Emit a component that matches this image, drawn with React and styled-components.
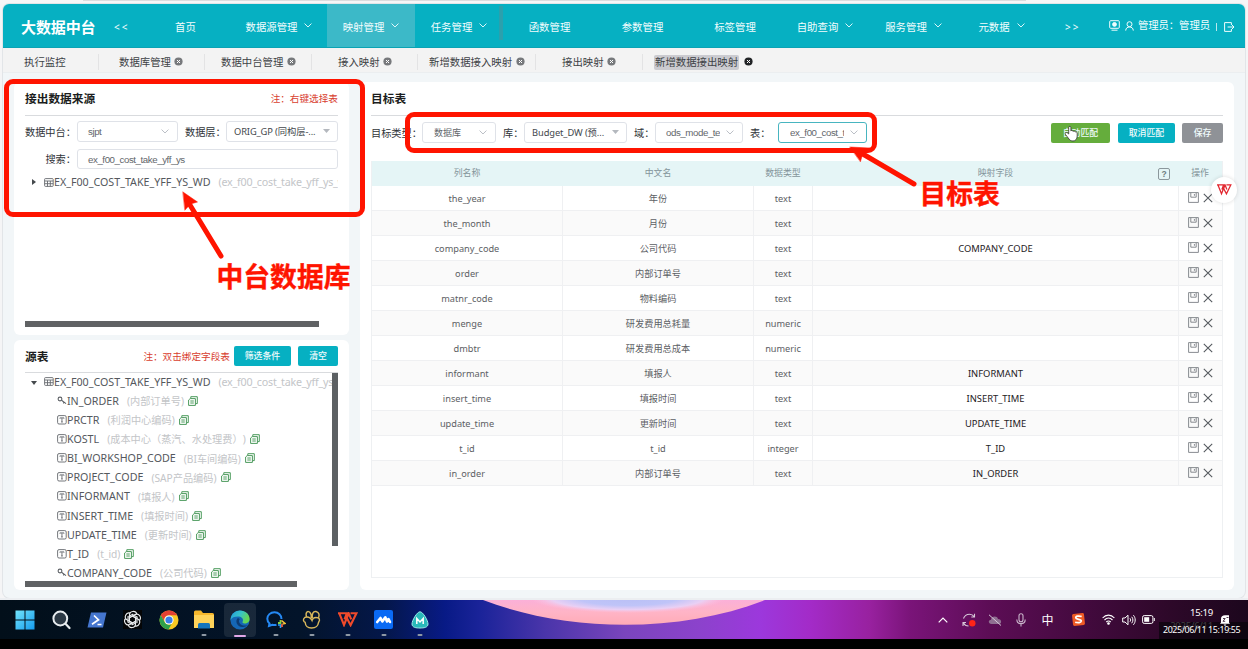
import React from "react";
import styled, { createGlobalStyle, css } from "styled-components";

const TEAL = "#06b0c2";
const RED = "#ff1400";
const SANS = `"Noto Sans", "Noto Sans CJK SC", sans-serif`;
const ARIAL = `"Liberation Sans", "Noto Sans CJK SC", sans-serif`;

const Global = createGlobalStyle`
  * { box-sizing: border-box; }
  html, body { margin: 0; padding: 0; overflow: hidden; }
  body { font-family: ${SANS}; font-size: 10.4px; color: #44484c; background: #f5f5f6; text-spacing-trim: space-all; }
  svg { display: block; flex: none; }
`;

/* ---------- shell ---------- */
const Screen = styled.div`
  position: relative; width: 1248px; height: 649px; overflow: hidden;
  display: flex; flex-direction: column;
`;
const BrowserEdge = styled.div`
  height: 4px; flex: none; display: flex; padding-left: 83px;
  background: #f6f6f7;
  &::before { content: ""; width: 943px; height: 1px; background: #dcdcde; }
`;
const Window = styled.div`
  height: 594px; margin: 0 3px; flex: none; display: flex; flex-direction: column;
  border-radius: 6px 6px 7px 7px; overflow: hidden; background: #f2f6f8;
  box-shadow: 0 0 0 1px #e2e5e8;
`;
const Edge = styled.div`height: 2px; background: #eceef1; flex: none;`;

/* ---------- header ---------- */
const Header = styled.header`
  height: 44px; flex: none; display: flex; align-items: center; background: ${TEAL};
  color: #f2fdfe; border-bottom: 1px solid #0aa3b4; white-space: nowrap;
`;
const Logo = styled.div`
  width: 111px; padding: 1px 0 0 18px; font-size: 15px; font-weight: 700; color: #fff;
  letter-spacing: -0.1px;
`;
const Arrows = styled.div`width: ${p => p.$w}px; letter-spacing: 2px; font-size: 10px; padding: 2px 0 0 ${p => p.$pl || 0}px;`;
const NavItem = styled.div`
  position: relative; width: ${p => p.$w}px; height: 43px; display: flex; align-items: center; justify-content: center;
  gap: 7px; padding-top: 1px; background: ${p => (p.$active ? "#3cb9c8" : "transparent")};
  svg { margin-top: -2px; }
  ${p => p.$streak && css`&::after { content: ""; position: absolute; right: 0; top: 2px; width: 4px; height: 34px; background: #2ba0ad; }`}
`;
const UserArea = styled.div`display: flex; align-items: center; margin-left: auto; padding-right: 10px;`;
const UserName = styled.span`margin: -2px 6px 0 4px; letter-spacing: -0.1px;`;
const Pipe = styled.span`width: 1px; height: 8px; background: #b9e8ee; margin: 3px 7px 0 0;`;
const Shift = styled.span`display: flex; margin: ${p => p.$m};`;

/* ---------- tabs ---------- */
const TabBar = styled.div`
  height: 25px; flex: none; display: flex; align-items: center; background: #f3f3f3;
  border-bottom: 1px solid #ebeef0; white-space: nowrap; padding-top: 4px;
`;
const Tab = styled.div`
  width: ${p => p.$w}px; padding-left: ${p => p.$pl}px; height: 16px; display: flex; align-items: center; gap: ${p => (p.$last ? 5 : 3.5)}px;
  border-right: 1px solid ${p => (p.$last ? "transparent" : "#e3e3e4")};
  color: #3e4246;
  svg { margin-top: -1px; }
`;
const TabText = styled.span`
  line-height: 15px; border-radius: 2px;
  ${p => p.$on && css`background: #cbcbd0; padding: 0 1px;`}
`;

/* ---------- panels ---------- */
const Content = styled.main`flex: 1; min-height: 0; display: flex; gap: 11px; padding: 9px 11px 8px;`;
const LeftCol = styled.div`width: 335px; display: flex; flex-direction: column; gap: 5px;`;
const Card = styled.section`
  background: #fff; border-radius: 6px; padding: 0 11px; display: flex; flex-direction: column;
  ${p => (p.$h ? `height: ${p.$h}px; flex: none;` : "flex: 1;")} min-width: 0; overflow: hidden;
`;
const CardHead = styled.div`
  height: ${p => p.$h || 34}px; flex: none; display: flex; align-items: center; border-bottom: 1px solid #d9dbde; white-space: nowrap;
  padding-bottom: ${p => p.$pb ?? 2}px;
`;
const Title = styled.h2`margin: 0; font-size: 11.7px; font-weight: 700; color: #1b1d20; flex: 1;`;
const Note = styled.span`font-size: 9.65px; color: #d8402f;`;
const FormRow = styled.div`height: ${p => p.$h}px; flex: none; display: flex; align-items: center; white-space: nowrap;`;
const Label = styled.label`
  width: ${p => p.$w}px; flex: none; text-align: ${p => (p.$right ? "right" : "left")}; color: #303438; font-size: 10.2px;
  padding-bottom: 1px; padding-right: ${p => (p.$right ? 1 : 0)}px;
`;
const Field = styled.div`
  width: ${p => p.$w}px; height: 20.5px; flex: none; display: flex; align-items: center; justify-content: space-between;
  border: 1px solid ${p => (p.$focus ? "#48b5c0" : "#dfe2e8")}; border-radius: 3px; background: #fff;
  padding: 0 ${p => p.$pr || 8}px 0 ${p => p.$pl || 10}px; color: #62666b; letter-spacing: ${p => p.$ls ?? -0.42}px;
  font-family: ${p => (p.$noto ? SANS : ARIAL)}; font-size: ${p => p.$fs || 9.7}px; overflow: hidden;
  ${p => p.$noto && css`color: #43474c; padding-bottom: 1px;`}
`;
const Clip = styled.span`overflow: hidden; ${p => p.$w && `width: ${p.$w}px;`}`;
const Button = styled.button`
  width: ${p => p.$w}px; height: ${p => p.$h || 20}px; border: 0; border-radius: 2px; padding: 0; flex: none;
  background: ${p => p.$bg || TEAL}; color: #f0fbfc; font: 500 8.9px ${SANS}; margin-left: ${p => p.$ml || 0}px;
`;
const Spacer = styled.div`flex: 1;`;
const HScroll = styled.div`width: ${p => p.$w}px; height: 6px; flex: none; background: #606264;`;

/* ---------- tree ---------- */
const TreeWrap = styled.div`display: flex; height: 208px; flex: none; overflow: hidden;`;
const Tree = styled.div`flex: 1; min-width: 0; overflow: hidden;`;
const VScroll = styled.div`width: 6px; height: 173px; background: #5c6063;`;
const Node = styled.div`
  height: ${p => p.$h || 19.17}px; display: flex; align-items: center; white-space: nowrap; overflow: hidden;
  padding-left: ${p => p.$pl}px; font-size: 10.7px; color: #54585d;
  ${p => p.$root && css`height: 18px; padding-bottom: 1px;`}
`;
const Caret = styled.span`
  width: 0; height: 0; margin-right: 7px; flex: none;
  ${p => p.$open
    ? css`border: 3px solid transparent; border-top: 4px solid #45494d; border-bottom: 0; margin-top: 2px;`
    : css`border: 3px solid transparent; border-left: 4px solid #45494d; border-right: 0; margin-right: 8px; margin-left: 1px;`}
`;
const Dim = styled.span`
  color: #c3c5c8; margin: 0 4px 0 8px; font-size: ${p => (p.$wide ? 10.7 : 10.2)}px;
  letter-spacing: ${p => (p.$wide ? -0.22 : 0)}px;
`;

/* ---------- table ---------- */
const Grid = styled.div`height: 417px; flex: none; border: 1px solid #eef0f2; border-top: 0; display: flex; flex-direction: column;`;
const Row = styled.div`
  display: grid; grid-template-columns: 191px 191px 59px 366px 1fr; height: 25px; flex: none;
  background: ${p => (p.$head ? "#e5f5f6" : p.$odd ? "#fafafa" : "#fff")};
  border-bottom: 1px solid ${p => (p.$head ? "#e5f5f6" : "#eff0f2")};
`;
const Cell = styled.div`
  position: relative; display: flex; align-items: center; justify-content: center; gap: 4px; white-space: nowrap;
  border-right: 1px solid ${p => (p.$plain ? "transparent" : "#eff0f2")};
  color: ${p => (p.$head ? "#83949a" : p.$strong ? "#1e2124" : "#5c6064")}; font-size: ${p => p.$fs || 9.2}px;
  padding-bottom: ${p => (p.$head || p.$up ? 1 : 0)}px;
`;
const Help = styled.span`
  position: absolute; right: 8px; top: 7px; width: 12px; height: 12px; border: 1px solid #8b979c; border-radius: 2px;
  font: 700 8.5px/10px ${ARIAL}; text-align: center; color: #6f7c81;
`;

/* ---------- annotations ---------- */
const Frame = styled.div`
  position: absolute; left: ${p => p.$x}px; top: ${p => p.$y}px; width: ${p => p.$w}px; height: ${p => p.$h}px;
  border: 5px solid ${RED}; border-radius: 9px;
`;
const Callout = styled.div`
  position: absolute; left: ${p => p.$x}px; top: ${p => p.$y}px; font: 700 26.8px/32px "Noto Sans CJK SC", sans-serif;
  color: ${RED}; white-space: nowrap; text-shadow: 0 0 2px #fff, 0 0 2px #fff; -webkit-text-stroke: .4px ${RED};
`;
const Overlay = styled.svg`position: absolute; left: 0; top: 0; pointer-events: none;`;
const Badge = styled.div`
  position: absolute; left: 1211px; top: 177px; width: 26px; height: 26px; border-radius: 50%; background: #fff;
  box-shadow: 0 0 4px rgba(0,0,0,.14); display: flex; align-items: center; justify-content: center;
`;

/* ---------- taskbar ---------- */
const Taskbar = styled.footer`
  position: relative; height: 39px; flex: none; display: flex; align-items: center; padding-left: 7px; overflow: hidden;
  background: linear-gradient(90deg, #020f1a 0, #03142a 300px, #04174a 385px, #081a86 445px, #1a2399 480px, #4a35aa 545px, #7a45bd 625px, #8c42cc 700px, #9c38dc 760px, #a32bc8 810px, #98219f 870px, #7a1479 910px, #5c0d55 990px, #440a3f 1080px, #2d0829 1170px, #1c071d 1248px);
`;
const Wallpaper = styled.svg`position: absolute; left: 460px; top: 0;`;
const TaskIcon = styled.div`
  position: relative; width: 35.9px; height: 34px; display: flex; align-items: center; justify-content: center;
  z-index: 1;
  ${p => p.$on && css`background: rgba(255,255,255,.09); border-radius: 4px; width: 32px; margin: 0 2px;`}
  &::after {
    content: ""; position: absolute; bottom: ${p => (p.$on ? 0 : 1)}px; left: 50%; height: 2px; border-radius: 1px; transform: translateX(-50%);
    width: ${p => (p.$on ? 12 : p.$run ? 5 : 0)}px; background: ${p => (p.$on ? "#e3a8e8" : "#8f9aa5")};
  }
`;
const Tray = styled.div`margin-left: auto; height: 39px; display: flex; align-items: center; color: #fff;`;
const TrayItem = styled.div`position: relative; z-index: 3; width: ${p => p.$w}px; display: flex; justify-content: center; font-size: 12px;`;
const Clock = styled.div`width: 52px; height: 32px; text-align: right; font-size: 9.6px; line-height: 13px; margin-top: 5px; letter-spacing: -0.3px; white-space: nowrap;`;
const Ghost = styled.div`color: #b5a6b5;`;
const Stamp = styled.div`
  position: absolute; right: 0; top: 22px; width: 89px; height: 17px; background: rgba(8,4,10,.68); z-index: 2; color: #fff;
  font-size: 8.9px; line-height: 16px; padding-left: 4px; white-space: nowrap; letter-spacing: -0.4px;
`;
const Bottom = styled.div`height: 10px; background: #000; flex: none;`;

/* ---------- icons ---------- */
const Chevron = ({ c = "#e8fafc", w = 8, up }) => (
  <svg width={w} height={w * 0.6} viewBox="0 0 10 6"><path d={up ? "M.7 5.300L5 1 9.300 5.300" : "M.7 .7L5 5 9.300 .7"} fill="none" stroke={c} strokeWidth="1.200" /></svg>
);
const Down = () => <svg width="7" height="4" viewBox="0 0 7 4"><path d="M0 0H7L3.5 4Z" fill="#b4b8be" /></svg>;
const Close = ({ c = "#77797c" }) => (
  <svg width="9" height="9" viewBox="0 0 9 9"><circle cx="4.5" cy="4.5" r="4.1" fill={c} /><path d="M3 3L6 6M6 3L3 6" stroke="#fff" strokeWidth="1" /></svg>
);
const TableIcon = () => (
  <svg width="10" height="9" viewBox="0 0 10 9" fill="none" stroke="#65696e" strokeWidth=".9"><rect x=".6" y=".6" width="8.6" height="7.8" rx=".8" /><path d="M.6 3H9.2M.6 5.7H9.2M3.5 3V8.4M6.3 3V8.4" /></svg>
);
const TypeIcon = () => (
  <svg width="10" height="10" viewBox="0 0 10 10" fill="none" stroke="#65696e" strokeWidth=".9"><rect x=".6" y=".6" width="8.6" height="8.4" rx="1.4" /><path d="M2.9 3.6V2.9H7V3.6M4.95 2.9V7M4.1 7H5.8" /></svg>
);
const KeyIcon = () => (
  <svg width="10" height="9" viewBox="0 0 10 9" fill="none" stroke="#5d6166" strokeWidth="1.1"><circle cx="3" cy="3" r="1.9" /><path d="M4.5 4.2L9 7.6M7 6.2L6.2 7.4" /></svg>
);
const CopyIcon = () => (
  <svg width="10" height="10" viewBox="0 0 10 10" fill="none" stroke="#4c9a5c" strokeWidth="1"><path d="M2.8 2.4V.7H9.3V7.6H7.6" /><path d="M.6 4L2.2 2.6H7.4V9.4H.6Z" /><path d="M2.3 5H5.8M2.3 7H5.8" /></svg>
);
const SaveIcon = () => (
  <svg width="11" height="11" viewBox="0 0 11 11" fill="none" stroke="#7b7f84" strokeWidth=".9"><path d="M.6 .6H10.4V10.4H.6Z" /><path d="M2.8 .8V5.2H8.2V.8M6.4 2V3.8" /></svg>
);
const CrossIcon = () => (
  <svg width="10" height="10" viewBox="0 0 10 10"><path d="M.8 .8L9.2 9.2M9.2 .8L.8 9.2" stroke="#555a5f" strokeWidth="1.1" /></svg>
);
const WMark = ({ w, c, sw = 2.1 }) => (
  <svg width={w} height={w * 0.75} viewBox="0 0 20 15" fill="none" stroke={c} strokeWidth={sw}>
    <path d="M0 1.300H8.800L6.500 7.300M1.300 1.300L6 13L10.700 1.300L13.200 7.300" /><path d="M8.800 6L12.600 13.200L18.400 1.300H12.500" />
  </svg>
);

/* ---------- data ---------- */
const NAV = [
  ["首页", 91], ["数据源管理", 96, 1], ["映射管理", 88, 1], ["任务管理", 88, 1], ["函数管理", 93], ["参数管理", 93],
  ["标签管理", 92], ["自助查询", 88, 1], ["服务管理", 89, 1], ["元数据", 87, 1],
];
const TABS = [
  ["执行监控", 96, 21], ["数据库管理", 106, 20], ["数据中台管理", 107, 16], ["接入映射", 106, 26],
  ["新增数据接入映射", 118, 11], ["接出映射", 107, 26], ["新增数据接出映射", 118, 11],
];
const FIELDS = [
  ["key", "IN_ORDER", "(内部订单号)"], ["t", "PRCTR", "(利润中心编码)"], ["t", "KOSTL", "(成本中心（蒸汽、水处理费）)"],
  ["t", "BI_WORKSHOP_CODE", "(BI车间编码)"], ["t", "PROJECT_CODE", "(SAP产品编码)"], ["t", "INFORMANT", "(填报人)"],
  ["t", "INSERT_TIME", "(填报时间)"], ["t", "UPDATE_TIME", "(更新时间)"], ["t", "T_ID", "(t_id)"], ["key", "COMPANY_CODE", "(公司代码)"],
];
const ROWS = [
  ["the_year", "年份", "text", ""], ["the_month", "月份", "text", ""], ["company_code", "公司代码", "text", "COMPANY_CODE"],
  ["order", "内部订单号", "text", ""], ["matnr_code", "物料编码", "text", ""], ["menge", "研发费用总耗量", "numeric", ""],
  ["dmbtr", "研发费用总成本", "numeric", ""], ["informant", "填报人", "text", "INFORMANT"], ["insert_time", "填报时间", "text", "INSERT_TIME"],
  ["update_time", "更新时间", "text", "UPDATE_TIME"], ["t_id", "t_id", "integer", "T_ID"], ["in_order", "内部订单号", "text", "IN_ORDER"],
];

function TopBar() {
  return (
    <Header>
      <Logo>大数据中台</Logo>
      <Arrows $w={26}>&lt;&lt;</Arrows>
      {NAV.map(([t, w, more]) => (
        <NavItem key={t} $w={w} $active={t === "映射管理"} $streak={t === "任务管理"}>{t}{more && <Chevron />}</NavItem>
      ))}
      <Arrows $w={40} $pl={20}>&gt;&gt;</Arrows>
      <UserArea>
        <svg width="11" height="11" viewBox="0 0 11 11" fill="none" stroke="#f0fcfd"><rect x=".7" y=".7" width="9.6" height="7.6" rx="1" /><circle cx="5.5" cy="4.4" r="1.9" fill="#f0fcfd" /><path d="M2.5 10.2H8.5" /></svg>
        <Shift $m="1px 0 0 5px">
          <svg width="9" height="10" viewBox="0 0 9 10" fill="none" stroke="#f0fcfd"><circle cx="4.5" cy="3.2" r="2.5" /><path d="M.7 9.6C.8 7 2.5 6 4.5 6S8.200 7 8.300 9.600" /></svg>
        </Shift>
        <UserName>管理员：管理员</UserName>
        <Pipe />
        <Shift $m="3px 0 0 0">
          <svg width="11" height="10" viewBox="0 0 11 10" fill="none" stroke="#f0fcfd"><path d="M7.400 3V.6H.6V9.400H7.400V7M3.600 5H10M8 3L10 5L8 7" /></svg>
        </Shift>
      </UserArea>
    </Header>
  );
}

function SourcePanel() {
  return (
    <Card $h={253}>
      <CardHead><Title>接出数据来源</Title><Note>注：右键选择表</Note></CardHead>
      <FormRow $h={31}>
        <Label $w={52}>数据中台：</Label>
        <Field $w={101}>sjpt<Chevron c="#b8bcc3" /></Field>
        <Spacer />
        <Label $w={41}>数据层：</Label>
        <Field $w={112} $noto $pl={7} $pr={7} $fs={9.3} $ls={-0.1}>ORIG_GP (同构层-...<Down /></Field>
      </FormRow>
      <FormRow $h={24}>
        <Label $w={52} $right>搜索：</Label>
        <Field $w={261}>ex_f00_cost_take_yff_ys</Field>
      </FormRow>
      <Node $pl={6} $h={22}><Caret /><TableIcon />EX_F00_COST_TAKE_YFF_YS_WD<Dim $wide>(ex_f00_cost_take_yff_ys_wd)</Dim></Node>
      <Spacer />
      <HScroll $w={294} />
      <FormRow $h={8} />
    </Card>
  );
}

function FieldPanel() {
  return (
    <Card>
      <CardHead $h={33} $pb={1}>
        <Title>源表</Title><Note>注：双击绑定字段表</Note>
        <Button $w={57} $ml={4}>筛选条件</Button><Button $w={40} $ml={7}>清空</Button>
      </CardHead>
      <TreeWrap>
        <Tree>
          <Node $pl={6} $root><Caret $open /><TableIcon />EX_F00_COST_TAKE_YFF_YS_WD<Dim $wide>(ex_f00_cost_take_yff_ys_wd)</Dim></Node>
          {FIELDS.map(([k, n, d]) => (
            <Node key={n} $pl={32}>{k === "key" ? <KeyIcon /> : <TypeIcon />}{n}<Dim>{d}</Dim><CopyIcon /></Node>
          ))}
        </Tree>
        <VScroll />
      </TreeWrap>
      <HScroll $w={272} />
    </Card>
  );
}

function TargetPanel() {
  return (
    <Card>
      <CardHead><Title>目标表</Title></CardHead>
      <FormRow $h={33}>
        <Label $w={51}>目标类型：</Label>
        <Field $w={74} $pl={11} $fs={9} $ls={0}>数据库<Chevron c="#b8bcc3" /></Field>
        <Shift $m="0 0 0 7px"><Label $w={21}>库：</Label></Shift>
        <Field $w={103} $noto $pl={7} $pr={7} $fs={9.3} $ls={-0.08}>Budget_DW (预...<Down /></Field>
        <Shift $m="0 0 0 7px"><Label $w={21}>域：</Label></Shift>
        <Field $w={88} $pl={10}><Clip>ods_mode_te</Clip><Chevron c="#b8bcc3" /></Field>
        <Shift $m="0 0 0 7px"><Label $w={28}>表：</Label></Shift>
        <Field $w={89} $focus $pl={11}><Clip $w={54}>ex_f00_cost_take</Clip><Chevron c="#b8bcc3" /></Field>
        <Spacer />
        <Button $w={59} $bg="#65ad3c">自动匹配</Button>
        <Button $w={57} $ml={8}>取消匹配</Button>
        <Button $w={41} $ml={7} $bg="#8f9297">保存</Button>
      </FormRow>
      <FormRow $h={12} />
      <Grid>
        <Row $head>
          {["列名称", "中文名", "数据类型"].map(t => <Cell key={t} $head $plain $fs={8.9}>{t}</Cell>)}
          <Cell $head $plain $fs={8.9}>映射字段<Help>?</Help></Cell>
          <Cell $head $plain $fs={8.9}>操作</Cell>
        </Row>
        {ROWS.map((r, i) => (
          <Row key={r[0]} $odd={i % 2 === 1}>
            <Cell>{r[0]}</Cell><Cell>{r[1]}</Cell><Cell>{r[2]}</Cell><Cell $strong $fs={9.4}>{r[3]}</Cell>
            <Cell $plain $up><SaveIcon /><CrossIcon /></Cell>
          </Row>
        ))}
      </Grid>
    </Card>
  );
}

function Annotations() {
  return (
    <>
      <Frame $x={4} $y={79} $w={361} $h={138} />
      <Frame $x={405} $y={112} $w={472} $h={41} />
      <Overlay width="1248" height="600">
        <g fill={RED} stroke={RED} strokeLinecap="round">
          <path d="M221 256L190 205" strokeWidth="5" /><path d="M183 192L197.500 202L190.500 204L185 210Z" strokeWidth=".5" />
          <path d="M914 184L862 153.500" strokeWidth="5" /><path d="M850 147L869.500 148L863 153L860.500 161.500Z" strokeWidth=".5" />
        </g>
        <path d="M1069 139L1065.500 134.500C1064.500 133 1066 131.800 1067.500 133L1068.700 134V127.500C1068.700 126 1070.900 126 1070.900 127.500V131C1071.500 130 1073 130.300 1073 131.500C1073.700 130.700 1075 131 1075 132C1076 131.500 1077.200 132 1077.200 133V136C1077.200 139 1075.500 141 1073 141C1071 141 1070 140.300 1069 139Z" fill="#fff" stroke="#333" strokeWidth=".8" />
      </Overlay>
      <Callout $x={216.5} $y={260}>中台数据库</Callout>
      <Callout $x={919.5} $y={177}>目标表</Callout>
      <Badge><WMark w={15} c="#e2252e" sw={1.7} /></Badge>
    </>
  );
}

function SystemBar() {
  return (
    <Taskbar>
      <Wallpaper width="340" height="39" viewBox="460 0 340 39">
        <defs>
          <linearGradient id="pink" x1="0" x2="0" y1="0" y2="1"><stop offset="0" stopColor="#fbb0d8" /><stop offset=".5" stopColor="#ffb4c6" /><stop offset="1" stopColor="#ffabb6" /></linearGradient>
          <radialGradient id="glow"><stop offset="0" stopColor="#b9bff5" /><stop offset=".5" stopColor="#bfc4f8" /><stop offset=".78" stopColor="#e9d0f4" /><stop offset="1" stopColor="#ffc0dc" stopOpacity="0" /></radialGradient>
        </defs>
        <path d="M483 0C570 33 680 33 765 0Z" fill="url(#pink)" />
        <ellipse cx="628" cy="-2" rx="98" ry="15" fill="url(#glow)" />
      </Wallpaper>
      <TaskIcon>
        <svg width="20" height="20" viewBox="0 0 20 20"><defs><linearGradient id="win" x2="1" y2="1"><stop stopColor="#72e4fb" /><stop offset="1" stopColor="#159bed" /></linearGradient></defs><path d="M.5 .5H9.500V9.500H.5ZM10.500 .5H19.500V9.500H10.500ZM.5 10.500H9.500V19.500H.5ZM10.500 10.500H19.500V19.500H10.500Z" fill="url(#win)" /></svg>
      </TaskIcon>
      <TaskIcon>
        <svg width="20" height="20" viewBox="0 0 20 20"><circle cx="9.300" cy="8.500" r="6.900" fill="#2c3945" stroke="#e8ecef" strokeWidth="2" /><path d="M14.500 13.700L18.500 18" stroke="#e8ecef" strokeWidth="2.200" strokeLinecap="round" /></svg>
      </TaskIcon>
      <TaskIcon>
        <svg width="20" height="16" viewBox="0 0 20 16"><path d="M4 .5H19.500L16 15.500H.5Z" fill="#4576cf" /><path d="M7 3.500L11.500 7.800L5 12.300M10.500 12.500H14.500" fill="none" stroke="#fff" strokeWidth="1.700" /></svg>
      </TaskIcon>
      <TaskIcon>
        <svg width="19" height="19" viewBox="0 0 20 20"><rect width="20" height="20" fill="#050607" /><g fill="none" stroke="#e9ebec" strokeWidth="1.200">{[0, 60, 120, 180, 240, 300].map(a => <path key={a} transform={`rotate(${a} 10 10)`} d="M6.800 12V5.500C6.800 .5 13.500 .3 14.500 4.300M6.800 8.200L11.500 5.400L15.500 7.800" />)}</g></svg>
      </TaskIcon>
      <TaskIcon>
        <svg width="20" height="20" viewBox="0 0 20 20"><circle cx="10" cy="10" r="9.500" fill="#f9c922" /><path d="M1.800 5.200A9.500 9.500 0 0 1 18.200 5.200H10A4.800 4.800 0 0 0 5.800 12.400Z" fill="#e34133" /><path d="M1.800 5.200L5.900 12.400A4.800 4.800 0 0 0 12.500 14L9.500 19.500A9.500 9.500 0 0 1 1.800 5.200Z" fill="#2fa04c" /><circle cx="10" cy="10" r="4.600" fill="#fff" /><circle cx="10" cy="10" r="3.600" fill="#3a7fe8" /></svg>
      </TaskIcon>
      <TaskIcon $run>
        <svg width="20" height="19" viewBox="0 0 20 19"><path d="M0 2Q0 .5 1.500 .5H7L9 3H18.500Q20 3 20 4.500V17H0Z" fill="#f6b72c" /><path d="M0 5H20V18H0Z" fill="#ffd35a" /><path d="M4 18.500V14.500Q4 13 5.500 13H14.500Q16 13 16 14.500V18.500Z" fill="#1675bd" /></svg>
      </TaskIcon>
      <TaskIcon $on>
        <svg width="20" height="20" viewBox="0 0 20 20"><defs><linearGradient id="edge" x2="1" y2=".4"><stop stopColor="#229bdc" /><stop offset=".55" stopColor="#38c5c6" /><stop offset="1" stopColor="#66d653" /></linearGradient></defs><circle cx="10" cy="10" r="9.600" fill="#1567b5" /><path d="M.6 8.500C1.500 3.500 5.500 .4 10 .4C15.500 .4 19.600 4 19.600 9C19.600 12 17 13.500 14.800 13.500C12.500 13.500 12.300 12.500 12.700 11.500C14 8.500 11 6.500 8 6.500C4.500 6.500 1.500 7.500 .6 10Z" fill="url(#edge)" /><path d="M8 8C4.500 10.500 7 17.500 13 17C15.500 16.800 17 15.800 17.800 15C13 16.500 9 14.500 9 11C9 10 9.800 9 9.800 9Z" fill="#0c3c74" /></svg>
      </TaskIcon>
      <TaskIcon $run>
        <svg width="20" height="18" viewBox="0 0 20 18" fill="none"><path d="M15.500 8C15.500 4 12.500 1.300 8.500 1.300S1.300 4 1.300 7.800C1.300 10 2.300 11.500 3.500 12.500L3 15L6.300 13.800C8 14.300 9 14.200 10.500 13.800" stroke="#2589f4" strokeWidth="2" /><path d="M14.500 9V12H12" stroke="#8bcf44" strokeWidth="1.800" /><path d="M15.500 9.500L19 12.500L16.500 13" stroke="#f5c338" strokeWidth="1.600" /><path d="M12 14H14.500V17" stroke="#2b9ef5" strokeWidth="1.600" /><path d="M16 13V16" stroke="#ec5a3c" strokeWidth="1.800" /></svg>
      </TaskIcon>
      <TaskIcon $run>
        <svg width="20" height="19" viewBox="0 0 20 19" fill="none" stroke="#d9b85c" strokeWidth="1.400"><path d="M5 7C1.500 7 .8 10 2 11.500C2.500 12 3 12 3.200 12.500C3.500 16.500 6 18 9.500 18S16 16.500 16.500 12.500C18.500 9.500 17.500 7.500 14 7.500C12 7.500 10.500 8.500 10 10.500C9 8.500 7.500 7 5 7Z" /><path d="M4.500 7C3 2 6 .3 8 2.500C9.500 4 9.500 6 9.200 8.500M10.300 8C9.800 4 11 1 14 1.500C17.500 2.500 17.500 5 16.500 8" /></svg>
      </TaskIcon>
      <TaskIcon $run><WMark w={20} c="#f04a2b" /></TaskIcon>
      <TaskIcon $run>
        <svg width="19" height="19" viewBox="0 0 19 19"><rect width="19" height="19" rx="2" fill="#0a6af4" /><path d="M3.200 12L6.500 8L8.300 11.500L11.300 7.300L13 11.500L14.500 9L16 12" fill="none" stroke="#fff" strokeWidth="2.600" strokeLinejoin="round" strokeLinecap="round" /></svg>
      </TaskIcon>
      <TaskIcon $run>
        <svg width="18" height="18" viewBox="0 0 18 18"><path d="M9 .8C12 .8 17 9.500 17 13C17 16.500 13 17 9 17S1 16.500 1 13C1 9.500 6 .8 9 .8Z" fill="#29b9ba" stroke="#9ceaea" /><path d="M5.800 13V7.500L9 11L12.200 7.500V13" fill="none" stroke="#fff" strokeWidth="1.500" /></svg>
      </TaskIcon>
      <Tray>
        <TrayItem $w={26}><Chevron c="#fff" w={10} up /></TrayItem>
        <TrayItem $w={26}>
          <svg width="14" height="14" viewBox="0 0 14 14" fill="none" stroke="#d6c8d8" strokeWidth="1.100"><path d="M1.500 5.500C2.500 2.500 5 1.200 7.500 1.200C9.500 1.200 11.200 2.200 12 3.500M12.500 .8V4H9.300M1 13V9.500H4M1.500 10C2.500 12 4.500 13 6.500 13" /><circle cx="10.300" cy="10.300" r="3.200" fill="#ff2418" stroke="none" /></svg>
        </TrayItem>
        <TrayItem $w={26}>
          <svg width="14" height="12" viewBox="0 0 14 12"><path d="M3.500 10C0 10 0 5.800 3 5.800C3.500 1.800 9 1.500 10 5C14 5 14 10 11 10Z" fill="#8f6f91" /><path d="M1 .8L13 11.500" stroke="#d6c8d8" /></svg>
        </TrayItem>
        <TrayItem $w={26}>
          <svg width="10" height="14" viewBox="0 0 10 14" fill="none" stroke="#c9b5ca" strokeWidth="1.100"><rect x="3" y=".7" width="4" height="8" rx="2" /><path d="M.8 6.500C.8 12 9.200 12 9.200 6.500M5 10.700V13.500" /></svg>
        </TrayItem>
        <TrayItem $w={27}>中</TrayItem>
        <TrayItem $w={34}>
          <svg width="13" height="13" viewBox="0 0 13 13"><rect x=".5" y=".5" width="12" height="12" rx="1.500" fill="#ee5a25" transform="rotate(-6 6.500 6.500)" /><path d="M9.700 3.500C7 2.700 3.500 3 3.800 4.900C4 6.700 9.500 6 9.300 8C9.200 9.800 6 10 3.200 9.200" fill="none" stroke="#fff" strokeWidth="1.700" /></svg>
        </TrayItem>
        <TrayItem $w={27}>
          <svg width="13" height="11" viewBox="0 0 13 11" fill="none" stroke="#fff" strokeWidth="1.100"><path d="M.6 4C4 .2 9 .2 12.400 4M2.500 6C5 3.400 8 3.400 10.500 6M4.300 8C5.700 6.600 7.300 6.600 8.700 8" /><circle cx="6.500" cy="9.500" r=".8" fill="#fff" /></svg>
        </TrayItem>
        <TrayItem $w={13}>
          <svg width="14" height="12" viewBox="0 0 14 12" fill="none" stroke="#fff"><path d="M.7 4V8H3L6 10.800V1.200L3 4ZM8 4.300C8.800 5.300 8.800 6.700 8 7.700M9.700 2.800C11.300 4.600 11.300 7.400 9.700 9.200M11.400 1.200C13.800 4 13.800 8 11.400 10.800" /></svg>
        </TrayItem>
        <TrayItem $w={26}>
          <svg width="13" height="9" viewBox="0 0 13 9"><rect x=".6" y=".6" width="10.300" height="7.800" rx="1.600" fill="none" stroke="#fff" /><rect x="2.200" y="2.200" width="5" height="4.600" fill="#fff" /><path d="M12.300 3V6" stroke="#fff" /></svg>
        </TrayItem>
        <Clock>15:19<Ghost>2025/6/11</Ghost></Clock>
        <TrayItem $w={24}>
          <svg width="12" height="12" viewBox="0 0 12 12"><path d="M2 8.500V5C2 2.500 3.500 1.300 6 1.300H10V8.500L11 9.800H1ZM4.500 10.500H7.500L6 12Z" fill="#fff" /><path d="M4 4.500H6.200L4 7.300H6.200M7.500 3.500H9.500" stroke="#3a2338" strokeWidth=".9" fill="none" /></svg>
        </TrayItem>
        <TrayItem $w={11} />
      </Tray>
      <Stamp>2025/06/11 15:19:55</Stamp>
    </Taskbar>
  );
}

export default function App() {
  return (
    <Screen>
      <Global />
      <BrowserEdge />
      <Window>
        <TopBar />
        <TabBar>
          {TABS.map(([t, w, pl], i) => (
            <Tab key={t} $w={w} $pl={pl} $last={i === 6}>
              <TabText $on={i === 6}>{t}</TabText>{i > 0 && <Close c={i === 6 ? "#222426" : undefined} />}
            </Tab>
          ))}
        </TabBar>
        <Content>
          <LeftCol><SourcePanel /><FieldPanel /></LeftCol>
          <TargetPanel />
        </Content>
      </Window>
      <Edge />
      <SystemBar />
      <Bottom />
      <Annotations />
    </Screen>
  );
}
